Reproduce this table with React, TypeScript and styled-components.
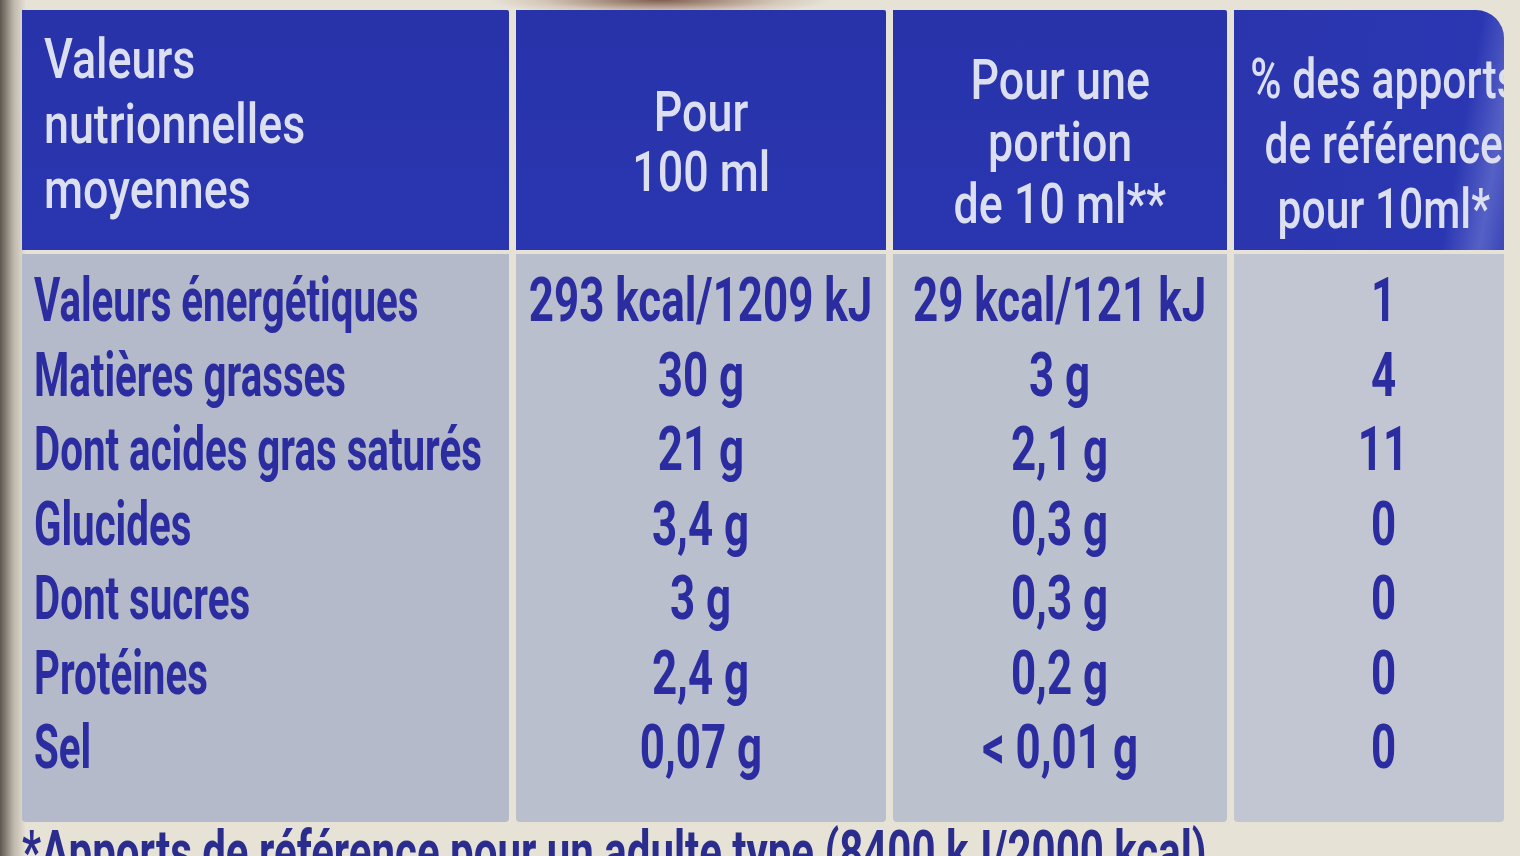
import React from "react"
import styled, { createGlobalStyle } from "styled-components"

const GlobalStyle = createGlobalStyle`
  html, body {
    margin: 0;
    padding: 0;
    background: #e6e2d5;
  }
  body {
    font-family: Roboto, "Liberation Sans", sans-serif;
  }
`

type Align = "left" | "center"

interface Column {
  title: string[]
  titleTop: number
  titleLine: number
  titleShift: number
  titleScale: number
  align: Align
  values: string[]
  valueShift: number
  tone: string
}

const columns: Column[] = [
  {
    title: ["Valeurs", "nutrionnelles", "moyennes"],
    titleTop: 17,
    titleLine: 65,
    titleShift: 22,
    titleScale: 0.8,
    align: "left",
    values: [
      "Valeurs énergétiques",
      "Matières grasses",
      "Dont acides gras saturés",
      "Glucides",
      "Dont sucres",
      "Protéines",
      "Sel",
    ],
    valueShift: 12,
    tone: "#b4bac9",
  },
  {
    title: ["Pour", "100 ml"],
    titleTop: 72,
    titleLine: 60,
    titleShift: 0,
    titleScale: 0.8,
    align: "center",
    values: ["293 kcal/1209 kJ", "30 g", "21 g", "3,4 g", "3 g", "2,4 g", "0,07 g"],
    valueShift: 0,
    tone: "#b9bfcd",
  },
  {
    title: ["Pour une", "portion", "de 10 ml**"],
    titleTop: 39,
    titleLine: 62,
    titleShift: 0,
    titleScale: 0.8,
    align: "center",
    values: ["29 kcal/121 kJ", "3 g", "2,1 g", "0,3 g", "0,3 g", "0,2 g", "< 0,01 g"],
    valueShift: 0,
    tone: "#bcc1ce",
  },
  {
    title: ["% des apports", "de référence", "pour 10ml*"],
    titleTop: 37,
    titleLine: 65,
    titleShift: 30,
    titleScale: 0.76,
    align: "center",
    values: ["1", "4", "11", "0", "0", "0", "0"],
    valueShift: 28,
    tone: "#c2c6d2",
  },
]

const NutritionLabel: React.FC = () => {
  return (
    <StyledPage>
      <StyledTopEdge />
      <StyledTable>
        {columns.map((col, i) => (
          <StyledHeadCell
            key={`h${i}`}
            $top={col.titleTop}
            $line={col.titleLine}
            $shift={col.titleShift}
            $corner={i === columns.length - 1}
          >
            {col.title.map((line) => (
              <StyledLine key={line} $align={col.align}>
                <StyledSqueeze $align={col.align} $sx={col.titleScale}>
                  {line}
                </StyledSqueeze>
              </StyledLine>
            ))}
          </StyledHeadCell>
        ))}
        {columns.map((col, i) => (
          <StyledBodyCell key={`b${i}`} $tone={col.tone} $shift={col.valueShift}>
            {col.values.map((value, j) => (
              <StyledLine key={j} $align={col.align}>
                <StyledSqueeze
                  $align={col.align}
                  $sx={col.align === "left" ? 0.66 : 0.72}
                >
                  {value}
                </StyledSqueeze>
              </StyledLine>
            ))}
          </StyledBodyCell>
        ))}
      </StyledTable>
      <StyledFootnote>
        <StyledSqueeze $align="left" $sx={0.7}>
          *Apports de référence pour un adulte type (8400 kJ/2000 kcal)
        </StyledSqueeze>
      </StyledFootnote>
    </StyledPage>
  )
}

const StyledPage = styled.div`
  position: relative;
  width: 1520px;
  height: 856px;
  overflow: hidden;
  background:
    linear-gradient(to right, rgba(70, 62, 55, 0.85) 0px, rgba(120, 110, 100, 0.35) 14px, rgba(0, 0, 0, 0) 26px),
    #e6e2d5;
`

const StyledTopEdge = styled.div`
  height: 10px;
  background: radial-gradient(
    ellipse 170px 16px at 660px 0px,
    rgba(110, 70, 55, 0.85),
    rgba(160, 120, 100, 0.25) 70%,
    rgba(0, 0, 0, 0)
  );
`

const StyledTable = styled.div`
  display: grid;
  grid-template-columns: 487px 370px 334px 270px;
  grid-template-rows: 240px 568px;
  column-gap: 7px;
  row-gap: 4px;
  padding-left: 22px;
`

const StyledHeadCell = styled.div<{
  $top: number
  $line: number
  $shift: number
  $corner: boolean
}>`
  padding-top: ${(p) => p.$top}px;
  padding-left: ${(p) => p.$shift}px;
  background: ${(p) =>
    p.$corner
      ? "linear-gradient(100deg, #2a35ad 0%, #2b37b2 80%, #5661c6 92%, #3b46b8 100%)"
      : "linear-gradient(180deg, #2833aa 0%, #2a36b0 100%)"};
  border-top-right-radius: ${(p) => (p.$corner ? "28px" : "2px")};
  color: #dcdff0;
  font-size: 56px;
  font-weight: 500;
  line-height: ${(p) => p.$line}px;
  min-width: 0;
  overflow: hidden;
`

const StyledBodyCell = styled.div<{ $tone: string; $shift: number }>`
  padding-top: 9px;
  padding-left: ${(p) => p.$shift}px;
  background: ${(p) => p.$tone};
  border-bottom-left-radius: 4px;
  border-bottom-right-radius: 4px;
  color: #2a2c9f;
  font-size: 61px;
  font-weight: 700;
  line-height: 74.5px;
  min-width: 0;
`

const StyledLine = styled.div<{ $align: Align }>`
  display: flex;
  justify-content: ${(p) => (p.$align === "left" ? "flex-start" : "center")};
  white-space: nowrap;
`

const StyledSqueeze = styled.span<{ $align: Align; $sx: number }>`
  display: inline-block;
  flex-shrink: 0;
  transform: scaleX(${(p) => p.$sx});
  transform-origin: ${(p) => (p.$align === "left" ? "left center" : "center center")};
  white-space: nowrap;
`

const StyledFootnote = styled.div`
  padding-left: 22px;
  color: #2b2d8e;
  font-size: 60px;
  font-weight: 700;
  line-height: 60px;
  white-space: nowrap;
`

export default function App() {
  return (
    <>
      <GlobalStyle />
      <NutritionLabel />
    </>
  )
}
